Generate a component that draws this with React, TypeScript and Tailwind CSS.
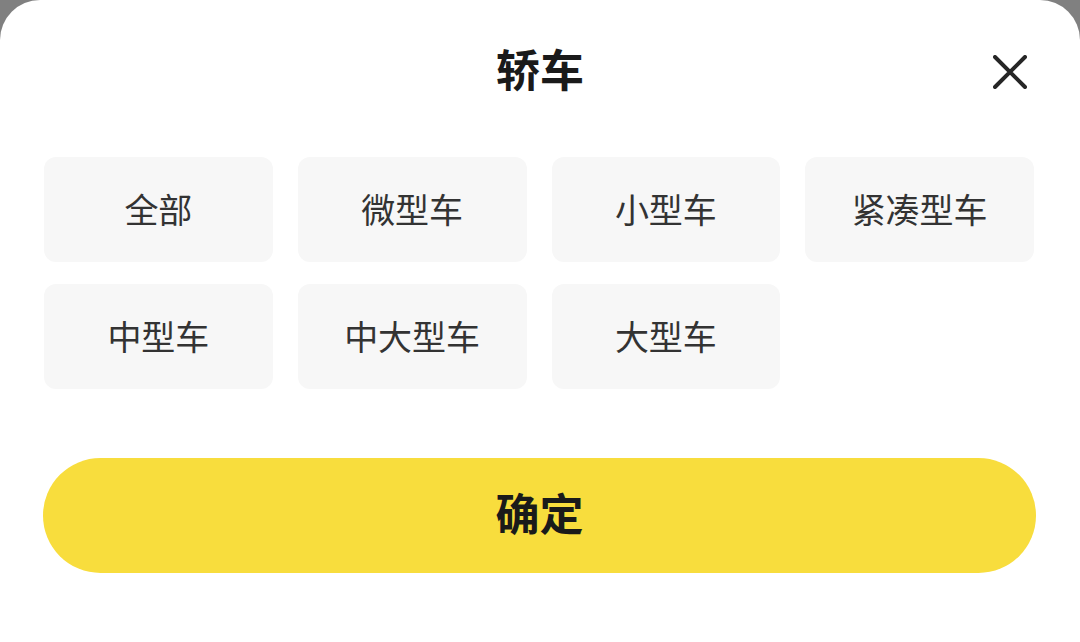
export default function App() {
  const options = ['全部', '微型车', '小型车', '紧凑型车', '中型车', '中大型车', '大型车'];

  return (
    <div className="w-[1080px] h-[642px] bg-[#808080] overflow-hidden" style={{ fontFamily: '"Noto Sans CJK SC", "Noto Sans", sans-serif' }}>
      <div className="h-full bg-white rounded-t-[40px] flex flex-col">
        {/* Header */}
        <div className="relative h-[144px] pb-[8px] flex items-center justify-center">
          <h1 className="text-[44px] leading-none font-bold text-[#1a1a1a]">轿车</h1>
          <button className="absolute right-[52px] top-[54px] w-[36px] h-[36px] flex items-center justify-center">
            <svg width="34" height="34" viewBox="0 0 34 34" fill="none">
              <path d="M2 2 L32 32 M32 2 L2 32" stroke="#262626" strokeWidth="4" strokeLinecap="round" />
            </svg>
          </button>
        </div>

        {/* Options */}
        <div className="pt-[13px] pl-[44px] pr-[46px] grid grid-cols-4 gap-x-[25px] gap-y-[22px]">
          {options.map((o) => (
            <div
              key={o}
              className="h-[105px] pb-[2px] rounded-[12px] bg-[#f7f7f7] flex items-center justify-center text-[34px] leading-none text-[#333333]"
            >
              {o}
            </div>
          ))}
        </div>

        {/* Confirm */}
        <div className="mt-[69px] pl-[43px] pr-[44px]">
          <button className="w-full h-[115px] pb-[8px] rounded-full bg-[#f8dd3d] flex items-center justify-center text-[44px] leading-none font-bold text-[#1a1a1a]">
            确定
          </button>
        </div>
      </div>
    </div>
  );
}
